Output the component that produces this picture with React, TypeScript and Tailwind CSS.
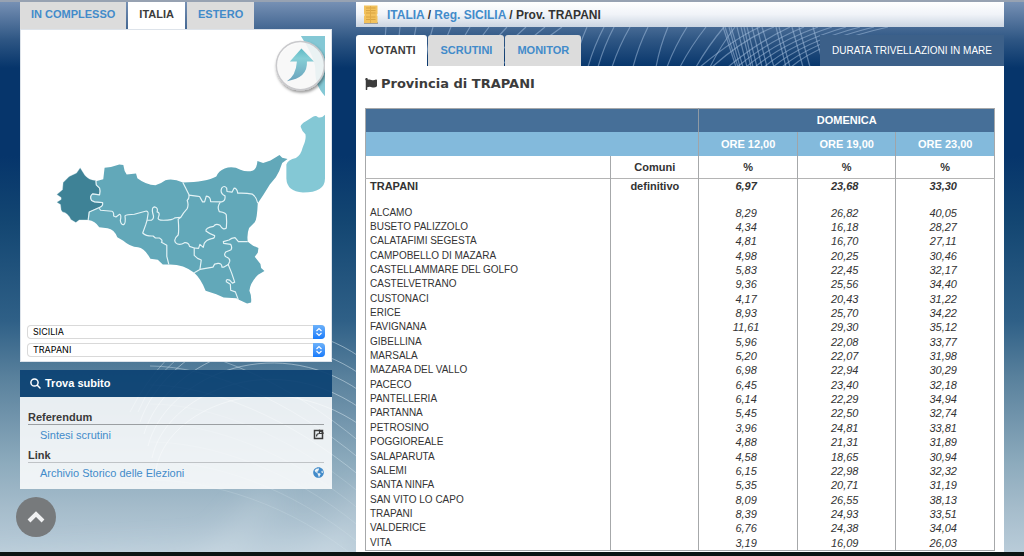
import React from 'react';
import { FaFlag, FaGlobeAmericas } from 'react-icons/fa';

const comuni = [
  ['ALCAMO', '8,29', '26,82', '40,05'],
  ['BUSETO PALIZZOLO', '4,34', '16,18', '28,27'],
  ['CALATAFIMI SEGESTA', '4,81', '16,70', '27,11'],
  ['CAMPOBELLO DI MAZARA', '4,98', '20,25', '30,46'],
  ['CASTELLAMMARE DEL GOLFO', '5,83', '22,45', '32,17'],
  ['CASTELVETRANO', '9,36', '25,56', '34,40'],
  ['CUSTONACI', '4,17', '20,43', '31,22'],
  ['ERICE', '8,93', '25,70', '34,22'],
  ['FAVIGNANA', '11,61', '29,30', '35,12'],
  ['GIBELLINA', '5,96', '22,08', '33,77'],
  ['MARSALA', '5,20', '22,07', '31,98'],
  ['MAZARA DEL VALLO', '6,98', '22,94', '30,29'],
  ['PACECO', '6,45', '23,40', '32,18'],
  ['PANTELLERIA', '6,14', '22,29', '34,94'],
  ['PARTANNA', '5,45', '22,50', '32,74'],
  ['PETROSINO', '3,96', '24,81', '33,81'],
  ['POGGIOREALE', '4,88', '21,31', '31,89'],
  ['SALAPARUTA', '4,58', '18,65', '30,94'],
  ['SALEMI', '6,15', '22,98', '32,32'],
  ['SANTA NINFA', '5,35', '20,71', '31,19'],
  ['SAN VITO LO CAPO', '8,09', '26,55', '38,13'],
  ['TRAPANI', '8,39', '24,93', '33,51'],
  ['VALDERICE', '6,76', '24,38', '34,04'],
  ['VITA', '3,19', '16,09', '26,03'],
];

const slants = [
  [386, 386], [400, 399], [416, 412], [433, 425], [451, 438], [470, 450], [489, 463], [507, 475],
  [526, 487], [545, 500], [562, 512], [587, 574], [604, 588], [614, 598], [630, 612], [648, 633],
  [668, 656], [687, 667], [706, 680], [724, 696], [735, 710],
];

const crossing = [
  [723, 736], [725, 738], [729, 740], [731, 743], [737, 747], [741, 751], [744, 753], [747, 757],
  [752, 762], [757, 767], [762, 774], [776, 786], [779, 790], [792, 803], [799, 810], [813, 824],
];

function Backdrop() {
  return (
    <svg
      className="absolute inset-0 h-full w-full"
      viewBox="0 0 1024 550"
      preserveAspectRatio="xMinYMin slice"
      fill="none"
      aria-hidden="true"
    >
      <defs>
        <filter id="soft"><feGaussianBlur stdDeviation="14" /></filter>
      </defs>
      <g filter="url(#soft)" stroke="#e2eef2" strokeOpacity="0.22" strokeWidth="22">
        <path d="M180 600 L272 490" />
        <path d="M290 600 L380 480" />
        <path d="M-20 570 L360 545" />
      </g>
      <g stroke="#a9c4e2" strokeOpacity="0.5" strokeWidth="1.2">
        {slants.map(([top, bottom]) => (
          <path key={top} d={`M${top} 25 Q${(top + bottom) / 2 - 2} 44 ${bottom} 65`} />
        ))}
        {crossing.map(([top, bottom]) => (
          <path key={top} d={`M${top} 25 L${bottom} 65`} />
        ))}
        {[0, 1, 2, 3, 4, 5, 6, 7].map((i) => (
          <path key={i} d={`M${728 + i * 9} 65 Q${758 + i * 9} 40 ${790 + i * 14} 25`} />
        ))}
        <path d="M700 65 Q735 36 760 25" />
        <path d="M712 65 Q745 36 774 25" />
      </g>
      <g stroke="#dceaf2" strokeWidth="1">
        {[0, 1, 2, 3, 4].map((i) => (
          <path
            key={i}
            strokeOpacity="0.5"
            d={`M${140 + i * 4} ${420 + i * 12} C165 ${348 + i * 15} 270 ${293 + i * 17} 360 ${355 + i * 17}`}
          />
        ))}
        {[5, 6, 7, 8, 9, 10, 11, 12].map((i) => (
          <path
            key={i}
            strokeOpacity={i < 8 ? 0.4 : 0.2}
            d={`M150 ${250 + i * 19} C210 ${250 + i * 19} 290 ${297 + i * 17} 360 ${355 + i * 17}`}
          />
        ))}
        <path strokeOpacity="0.4" d="M130 410 Q145 380 168 356" />
        <path strokeOpacity="0.4" d="M138 410 Q150 380 178 356" />
      </g>
    </svg>
  );
}

function SiciliaMap() {
  return (
    <svg className="block w-full" viewBox="28 36 297 285" role="img" aria-label="Mappa della Sicilia">
      <defs>
        <linearGradient id="arrow" x1="0" y1="0" x2="0" y2="1">
          <stop offset="0" stopColor="#5fb9c4" />
          <stop offset="0.3" stopColor="#86cfd6" />
          <stop offset="1" stopColor="#6ba3bd" />
        </linearGradient>
        <filter id="shadow" x="-20%" y="-20%" width="150%" height="150%">
          <feDropShadow dx="1" dy="2" stdDeviation="1.5" floodOpacity="0.5" />
        </filter>
      </defs>
      <path fill="#84c8d5" d="M301 36 H325 V96 Q319 89 317 83 C315 76 315.500 70 315 66 C313 55 306 44 301 36Z" />
      <path
        fill="#84c8d5"
        d="M325 114.500 Q322 118 318 117 Q316 115 313 116.500 L306 121 Q301 123.500 300.700 126.500 Q302 131 305.500 134 C306.500 139 304 144 302.500 148 Q301 155 296 157.500 Q288 159 286.500 164 V178 Q287 191 303 192 Q325 192 325 178Z"
      />
      <g transform="translate(40 140) scale(0.33333)" stroke="none" strokeLinejoin="round">
        <path
          fill="#62a8b9"
          d="M170 122 L192 116 L196 82 L215 80 L240 72 L252 74 L256 92 L262 102 L290 99 L294 113 Q320 133 348 134 Q365 129 378 119 Q402 113 430 126 Q500 125 530 108 Q536 92 555 84 Q580 76 602 88 Q622 96 640 90 Q651 85 653 62 L670 68 L692 60 L719 44 L727 52 L743 56 L727 68 Q720 92 708 110 L690 132 L670 164 L654 188 Q652 236 645 245 L628 262 Q621 280 624 303 L640 315 L656 322 L654 336 L645 348 L662 370 L664 382 L674 391 L655 402 Q631 425 629 450 Q636 465 634 485 L622 488 L596 476 L590 472 L552 470 L530 460 L498 450 Q485 415 464 396 Q432 370 388 371 L370 371 L355 357 L333 354 Q315 322 296 320 Q272 318 252 300 L234 290 Q225 266 205 263 L180 260 Q168 240 147 238 L130 200 L140 150Z"
        />
        <path
          fill="#3e8296"
          stroke="#e4f3f6"
          strokeWidth="1"
          d="M123 82 L137 104 Q148 118 170 120 L172 134 L181 143 Q184 152 181 163 L160 160 Q150 168 157 180 L166 184 L190 186 Q192 196 182 200 L150 214 L147 238 L120 238 L110 246 L95 237 Q87 217 70 214 L66 208 L64 192 L53 185 L66 177 L66 171 L53 162 L70 148 L72 126 L90 108 L112 98Z"
        />
        <g fill="none" stroke="#e4f3f6" strokeWidth="3.500">
          <path d="M170 120 L171 133 L181 143 Q184 152 181 163 L160 160 Q150 168 157 180 L166 184 L190 186 Q192 196 182 200 L150 214 L147 238" />
          <path d="M180 203 L184 209 L218 212 Q224 214 223 226 L230 229 L241 221 Q247 222 243 240 Q246 254 253 252 Q260 248 257 226 Q262 221 285 221 L318 212 Q327 210 326 220 L323 239" />
          <path d="M323 239 L336 239 Q346 234 340 218 Q336 200 345 199 Q357 201 353 214 Q363 216 357 229 Q352 239 372 239 Q400 239 406 232 L424 230" />
          <path d="M323 239 L319 252 L310 277 Q320 287 341 286 L348 292 L360 292 Q371 298 366 305 L382 314 L382 347 L388 371" />
          <path d="M430 126 L438 142 L448 162 Q450 174 443 180 Q448 192 443 204 Q430 218 424 230 L416 236 Q419 270 416 283 Q401 295 408 306 Q419 316 435 306 Q447 305 450 317 L464 322 L464 344 L474 353 L485 358 L481 386 L464 396" />
          <path d="M448 164 L471 167 L480 168 L489 184 L495 184 L500 167 Q513 168 513 183 L546 184 Q558 181 556 166 Q540 158 546 143 Q554 133 561 143 L562 153 L577 155 L583 143 Q592 143 594 158 Q620 157 638 161 Q650 169 654 188" />
          <path d="M542 185 Q531 200 539 213 Q562 216 560 226 Q562 245 560 262 Q550 270 541 254 Q528 247 522 257 Q497 261 499 271 Q509 279 525 285 Q526 293 516 294 Q501 297 494 308 L491 320 L481 311 L477 323 L464 322" />
          <path d="M624 303 L596 303 L586 291 Q575 292 568 298 L551 303 L552 308 L573 311 Q579 322 573 328 L558 334 Q551 343 560 349 Q572 353 570 362 L566 371 L553 379 L547 379 Q546 367 535 368 L525 370 L520 379 L481 386" />
          <path d="M565 370 L576 397 L585 424 L578 427 L570 418 Q558 413 560 423 L572 430 L573 448 L587 453 L596 477" />
        </g>
      </g>
      <circle cx="300.500" cy="65.500" r="24" fill="#fff" fillOpacity="0.72" stroke="#c9c9cc" strokeWidth="1.500" filter="url(#shadow)" />
      <circle cx="300.500" cy="65.500" r="23" fill="#fff" fillOpacity="0.4" />
      <path fill="url(#arrow)" d="M301.500 48.500 L314 61.500 H307 Q308 78 287 81 Q296 76 297 61.500 H290Z" />
    </svg>
  );
}

function Selector({ label, value }: { label: string; value: string }) {
  return (
    <div className="relative h-[14px]">
      <select
        aria-label={label}
        className="block h-full w-full appearance-none rounded bg-white pl-[6px] font-[Inter,sans-serif] text-[9px] leading-[14px] text-black ring-1 ring-[#d9d9d9] ring-inset"
      >
        <option>{value}</option>
      </select>
      <span className="pointer-events-none absolute inset-y-0 right-0 flex w-3 items-center justify-center rounded-r bg-linear-to-b from-[#6bb1fa] to-[#157bfb]">
        <svg className="h-[10px] w-[10px]" viewBox="0 0 10 10" fill="none" stroke="#fff" strokeWidth="1.200">
          <path d="M2.500 4 L5 1.500 L7.500 4 M2.500 6 L5 8.500 L7.500 6" />
        </svg>
      </span>
    </div>
  );
}

function Sidebar() {
  return (
    <aside className="flex w-[312px] shrink-0 flex-col">
      <nav className="flex gap-[2px] text-[11px] leading-[25px] font-bold">
        <a href="#complesso" className="h-[27px] bg-[#dcdcdc] px-[11px] text-[#428bca]">IN COMPLESSO</a>
        <a href="#italia" className="h-[27px] bg-white px-[11px] text-[#3c3c3c]">ITALIA</a>
        <a href="#estero" className="h-[27px] bg-[#dcdcdc] px-[11px] text-[#428bca]">ESTERO</a>
      </nav>
      <section className="border border-[#dde3ea] bg-white px-[6px] pt-[6px] pb-1">
        <SiciliaMap />
        <div className="flex flex-col gap-1 pt-[3px]">
          <Selector label="Regione" value="SICILIA" />
          <Selector label="Provincia" value="TRAPANI" />
        </div>
      </section>

      {/* Trova subito */}
      <section className="mt-2">
        <h2 className="flex h-[27px] items-center gap-1 bg-[#0e4374]/95 px-[10px] text-[11px] font-bold text-white">
          <svg className="h-[11px] w-[11px]" viewBox="0 0 11 11" fill="none" stroke="currentColor" strokeWidth="1.500" strokeLinecap="round">
            <circle cx="4.500" cy="4.500" r="3.600" />
            <path d="M7.300 7.300 L10 10" />
          </svg>
          Trova subito
        </h2>
        <div className="bg-white/85 px-2 pt-[14px] pb-[6px] text-[11px]">
          <h3 className="border-b border-[#9b9fa2] leading-[13px] font-bold text-[#3a3a3a]">Referendum</h3>
          <div className="flex h-5 items-center justify-between pl-3">
            <a href="#sintesi" className="text-[#428bca]">Sintesi scrutini</a>
            <svg className="h-[11px] w-[11px]" viewBox="0 0 11 11" fill="none" stroke="#3c3c3c" strokeWidth="1.500">
              <path d="M6 1.500 H1.500 V9.500 H9.500 V1.500 H8" />
              <path d="M3.500 7.500 Q3.500 4.500 6.500 4.500 H10.500 M6.500 0.500 V4.500 M7 1 L10.500 4.500" strokeWidth="1.200" />
            </svg>
          </div>
          <h3 className="mt-1 border-b border-[#bfc3c6] leading-[13px] font-bold text-[#3a3a3a]">Link</h3>
          <div className="flex h-5 items-center justify-between pl-3">
            <a href="#archivio" className="text-[#428bca]">Archivio Storico delle Elezioni</a>
            <FaGlobeAmericas className="h-[11px] w-[11px] text-[#428bca]" />
          </div>
        </div>
      </section>

      <button
        type="button"
        aria-label="Torna su"
        className="mt-2 -ml-1 flex h-10 w-10 items-center justify-center rounded-full bg-[#777a7c]"
      >
        <svg className="h-4 w-5" viewBox="0 0 20 16" fill="none" stroke="#f0f1f2" strokeWidth="4">
          <path d="M3 12 L10 5 L17 12" />
        </svg>
      </button>
    </aside>
  );
}

function Risultati() {
  return (
    <table className="w-full flex-1 table-fixed border-collapse border border-[#a6a8aa] text-center text-[11px] leading-[14px] text-[#333]">
      <colgroup>
        <col className="w-[39%]" />
        <col className="w-[14%]" />
        <col />
        <col />
        <col />
      </colgroup>
      <thead>
        <tr className="h-[23px] bg-[#466f98] text-white">
          <th colSpan={2} className="border-r border-[#8f9aa5]"></th>
          <th colSpan={3}>DOMENICA</th>
        </tr>
        <tr className="h-6 bg-[#83badc] text-white">
          <th colSpan={2} className="border-r border-[#a0a4a8]"></th>
          <th className="border-r border-[#a0a4a8]">ORE 12,00</th>
          <th className="border-r border-[#a0a4a8]">ORE 19,00</th>
          <th>ORE 23,00</th>
        </tr>
        <tr className="h-[23px] border-b border-[#b4b4b4]">
          <th className="border-r border-[#a6a8aa]"></th>
          <th className="border-r border-[#a6a8aa]">Comuni</th>
          <th className="border-r border-[#a6a8aa]">%</th>
          <th className="border-r border-[#a6a8aa]">%</th>
          <th>%</th>
        </tr>
      </thead>
      <tbody>
        <tr className="h-[27px] align-top font-bold">
          <td className="border-r border-[#a6a8aa] pl-1 text-left">TRAPANI</td>
          <td className="border-r border-[#a6a8aa]">definitivo</td>
          <td className="border-r border-[#a6a8aa] pr-1 italic">6,97</td>
          <td className="border-r border-[#a6a8aa] pr-1 italic">23,68</td>
          <td className="pr-1 italic">33,30</td>
        </tr>
        {comuni.map(([name, ore12, ore19, ore23]) => (
          <tr key={name}>
            <td className="border-r border-[#a6a8aa] pl-1 text-left text-[10px]">{name}</td>
            <td className="border-r border-[#a6a8aa]"></td>
            <td className="border-r border-[#a6a8aa] pr-1 italic">{ore12}</td>
            <td className="border-r border-[#a6a8aa] pr-1 italic">{ore19}</td>
            <td className="pr-1 italic">{ore23}</td>
          </tr>
        ))}
      </tbody>
    </table>
  );
}

function Main() {
  return (
    <main className="flex min-w-0 flex-1 flex-col">
      <div className="flex h-[25px] items-center gap-2 bg-linear-to-b from-white via-[#f0f3f8] to-[#cbd5e2] px-[7px] text-[12px] font-bold text-[#333]">
        <svg className="h-5 w-4" viewBox="0 0 16 20" aria-hidden="true">
          <path d="M1 17 H15 V19 H1Z" fill="#6f6a60" fillOpacity="0.55" />
          <path d="M1 0.500 H14.500 V9 L13.500 10 L14.500 11 V18 H1 V11 L2 10 L1 9Z" fill="#f2c15c" />
          <path d="M3 3 H12.500 M3 5.500 H12.500 M3 8 H12.500 M3 12 H12.500 M3 14.500 H12.500" stroke="#cf9838" strokeOpacity="0.7" />
          <path d="M7.500 1 V18" stroke="#e0ab48" />
        </svg>
        <nav>
          <a href="#italia" className="text-[#428bca]">ITALIA</a> / <a href="#sicilia" className="text-[#428bca]">Reg. SICILIA</a> / Prov. TRAPANI
        </nav>
      </div>

      <div className="mt-2 flex h-[31px] items-stretch justify-between text-[11px] leading-[31px]">
        <nav className="flex gap-px font-bold">
          <a href="#votanti" className="rounded-t-[3px] bg-white px-3 text-[#3c3c3c]">VOTANTI</a>
          <a href="#scrutini" className="rounded-t-[3px] bg-[#dcdcdc] px-3 text-[#428bca]">SCRUTINI</a>
          <a href="#monitor" className="rounded-t-[3px] bg-[#dcdcdc] px-3 text-[#428bca]">MONITOR</a>
        </nav>
        <p className="bg-[#3c6089] px-3 text-[10px] text-white">DURATA TRIVELLAZIONI IN MARE</p>
      </div>

      <section className="flex flex-1 flex-col bg-white px-[9px] pt-[9px] pb-px">
        <h1 className="mb-[15px] flex items-center gap-1 font-['DejaVu_Sans',sans-serif] text-[13px] leading-[18px] font-bold text-[#3c3c3c]">
          <FaFlag className="h-3 w-3" />
          Provincia di TRAPANI
        </h1>
        <Risultati />
      </section>
    </main>
  );
}

export default function App() {
  return (
    <div className="relative flex min-h-screen flex-col border-t-2 border-b-4 border-t-[#97a2b2] border-b-[#0b1413] bg-[linear-gradient(to_bottom,#7690b4_0%,#2d5583_7%,#06356b_12%,#06356b_28%,#134672_40%,#2f6087_58%,#58809c_68%,#8dabbd_84%,#a5bccb_92%,#b9ccd9_100%)] font-['Liberation_Sans',Arial,sans-serif]">
      <Backdrop />
      <div className="relative flex flex-1 gap-6 px-5">
        <Sidebar />
        <Main />
      </div>
    </div>
  );
}
